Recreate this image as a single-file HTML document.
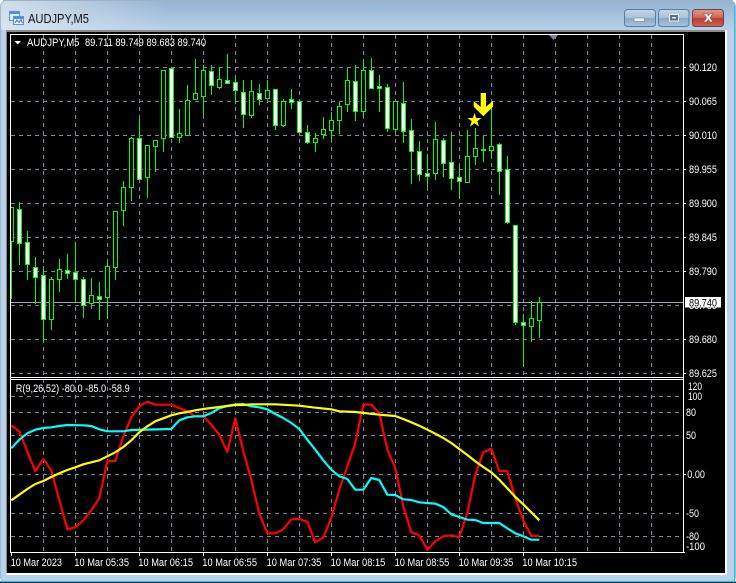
<!DOCTYPE html>
<html>
<head>
<meta charset="utf-8">
<title>AUDJPY,M5</title>
<style>
html,body{margin:0;padding:0;background:#fff;}
body{width:736px;height:583px;overflow:hidden;position:relative;font-family:"Liberation Sans",sans-serif;}
svg{position:absolute;left:0;top:0;display:block;}
</style>
</head>
<body>
<svg width="736" height="583" viewBox="0 0 736 583" xmlns="http://www.w3.org/2000/svg">
<defs>
<linearGradient id="tb" x1="0" y1="0" x2="0" y2="1"><stop offset="0" stop-color="#93b3d2"/><stop offset="1" stop-color="#b9d1ea"/></linearGradient>
<linearGradient id="tl" x1="0" y1="0" x2="1" y2="0"><stop offset="0" stop-color="#e6ebf0" stop-opacity=".75"/><stop offset="1" stop-color="#e6ebf0" stop-opacity="0"/></linearGradient>
<linearGradient id="btn" x1="0" y1="0" x2="0" y2="1"><stop offset="0" stop-color="#c3d5e7"/><stop offset=".48" stop-color="#a9c2db"/><stop offset=".52" stop-color="#8aa8c8"/><stop offset="1" stop-color="#a8c4e0"/></linearGradient>
<linearGradient id="cls" x1="0" y1="0" x2="0" y2="1"><stop offset="0" stop-color="#dd9a8e"/><stop offset=".48" stop-color="#cb6557"/><stop offset=".52" stop-color="#b83f30"/><stop offset="1" stop-color="#c6625a"/></linearGradient>
<clipPath id="ch"><rect x="11" y="35" width="672" height="517"/></clipPath>
</defs>

<!-- window -->
<rect x="0" y="0" width="736" height="583" fill="#fff"/>
<rect x="0.5" y="0.5" width="735" height="582" rx="6" fill="#b9d1ea" stroke="#a4bace"/>
<rect x="1" y="1" width="734" height="30" rx="5" fill="url(#tb)"/>
<rect x="1" y="1" width="170" height="30" rx="5" fill="url(#tl)"/>
<rect x="3" y="0" width="730" height="1" fill="#9fb1c2"/>
<rect x="0" y="581" width="736" height="1" fill="#28c0dc"/>
<rect x="734" y="6" width="1" height="576" fill="#28c0dc"/>
<rect x="0" y="582" width="736" height="1" fill="#1b3a50"/>

<!-- client frame -->
<rect x="6" y="30" width="721" height="545" fill="#fff"/>
<rect x="6" y="30" width="719" height="543" fill="#000"/>
<rect x="6" y="30" width="719" height="2" fill="#8a8a8a"/>
<rect x="6" y="30" width="1" height="543" fill="#8a8a8a"/>

<!-- title icon -->
<g shape-rendering="crispEdges">
<rect x="9.5" y="11.5" width="10" height="9" fill="#dfeafa" stroke="#5f8fd0"/>
<rect x="10" y="12" width="9" height="2" fill="#4f8fe0"/>
<rect x="13.5" y="16.5" width="10" height="8" fill="#eef4fc" stroke="#5f8fd0"/>
<rect x="14" y="17" width="9" height="2" fill="#4f8fe0"/>
</g>
<path d="M15 23l2-3 2 2.500 2-3 1.500 3.500" fill="none" stroke="#3a6fb8" stroke-width="1"/>

<text x="28" y="23" font-size="12.500" fill="#111" textLength="61" lengthAdjust="spacingAndGlyphs" font-family="Liberation Sans, sans-serif">AUDJPY,M5</text>

<!-- buttons -->
<rect x="624.5" y="9.500" width="31" height="17" rx="3" fill="url(#btn)" stroke="#5d7c9c"/>
<rect x="634" y="18" width="10.500" height="3.500" rx="1" fill="#eef2f6" stroke="#5d6f84" stroke-width=".5"/>
<rect x="658.5" y="9.500" width="30.500" height="17" rx="3" fill="url(#btn)" stroke="#5d7c9c"/>
<rect x="669.5" y="14.500" width="9" height="6.500" fill="#5a6f88" stroke="#eef2f6"/>
<rect x="672" y="17" width="4" height="1.500" fill="#dfe7ef"/>
<rect x="692.5" y="9.500" width="31" height="17" rx="3" fill="url(#cls)" stroke="#74403f"/>
<path d="M703.500 13.500h3l1.800 2.300 1.800-2.300h3l-3.200 4.200 3.200 4.300h-3l-1.800-2.400-1.800 2.400h-3l3.200-4.300z" fill="#f4f1ee" stroke="#7c3a32" stroke-width=".5"/>

<!-- grid -->
<path d="M11 67.500H683M11 101.500H683M11 135.500H683M11 169.500H683M11 203.500H683M11 237.500H683M11 271.500H683M11 305.500H683M11 339.500H683M11 373.500H683M11 396.500H683M11 412.500H683M11 435.500H683M11 474.500H683M11 513.500H683M11 536.500H683M43.500 35V552M75.500 35V552M107.500 35V552M139.500 35V552M171.500 35V552M203.500 35V552M235.500 35V552M267.500 35V552M299.500 35V552M331.500 35V552M363.500 35V552M395.500 35V552M427.500 35V552M459.500 35V552M491.500 35V552M523.500 35V552M555.500 35V552M587.500 35V552M619.500 35V552M651.500 35V552" fill="none" stroke="#778899" stroke-width="1" stroke-dasharray="4 4"/>

<!-- current price line -->
<rect x="11" y="302" width="672" height="1" fill="#9aa4b2"/>

<g clip-path="url(#ch)">
<!-- wicks -->
<path d="M11.500 207V299M19.500 202V265M27.500 231V280M35.500 257V304M43.500 266V343M51.500 277V330M59.500 259V292M67.500 254V279M75.500 242V301M83.500 277V318M91.500 278V309M99.500 282V320M107.500 262V319M115.500 211V280M123.500 181V226M131.500 137V201M139.500 118V180M147.500 145V198M155.500 140V172M163.500 70V152M171.500 68V137M179.500 109V143M187.500 85V136M195.500 59V100M203.500 65V115M211.500 65V95M219.500 67V89M227.500 54V84M235.500 76V104M243.500 80V128M251.500 80V118M259.500 84V105M267.500 80V99M275.500 89V130M283.500 99V127M291.500 89V109M299.500 101V133M307.500 125V144M315.500 133V152M323.500 117V139M331.500 112V139M339.500 102V134M347.500 68V112M355.500 65V121M363.500 59V117M371.500 58V88M379.500 75V112M387.500 84V132M395.500 101V133M403.500 82V143M411.500 119V184M419.500 141V181M427.500 154V187M435.500 122V180M443.500 138V177M451.500 132V190M459.500 165V199M467.500 130V182M475.500 128V165M483.500 136V162M491.500 107V157M499.500 143V195M507.500 156V224M515.500 225V325M523.500 314V367M531.500 301V342M539.500 297V338" fill="none" stroke="#00ff00" stroke-width="1"/>
<!-- bearish bodies -->
<path d="M17.500 209.500h4v34h-4zM25.500 242.500h4v22h-4zM33.500 267.500h4v10h-4zM41.500 275.500h4v44h-4zM65.500 270.500h4v3h-4zM73.500 272.500h4v7h-4zM81.500 279.500h4v26h-4zM97.500 296.500h4v3h-4zM137.500 138.500h4v41h-4zM169.500 68.500h4v69h-4zM209.500 71.500h4v14h-4zM225.500 80.500h4v3h-4zM233.500 82.500h4v8h-4zM241.500 92.500h4v22h-4zM257.500 93.500h4v6h-4zM273.500 89.500h4v36h-4zM289.500 99.500h4v3h-4zM297.500 101.500h4v31h-4zM305.500 132.500h4v10h-4zM353.500 81.500h4v30h-4zM369.500 70.500h4v18h-4zM377.500 86.500h4v2h-4zM385.500 87.500h4v41h-4zM401.500 103.500h4v28h-4zM409.500 130.500h4v21h-4zM417.500 151.500h4v23h-4zM425.500 173.500h4v3h-4zM441.500 140.500h4v23h-4zM449.500 162.500h4v16h-4zM457.500 177.500h4v4h-4zM497.500 144.500h4v27h-4zM505.500 169.500h4v53h-4zM513.500 225.500h4v97h-4zM521.500 322.500h4v3h-4z" fill="#fff" stroke="#00ff00" stroke-width="1"/>
<!-- bullish bodies -->
<path d="M9.500 207.500h4v34h-4zM49.500 279.500h4v40h-4zM57.500 269.500h4v10h-4zM89.500 295.500h4v8h-4zM105.500 266.500h4v31h-4zM113.500 211.500h4v56h-4zM121.500 187.500h4v23h-4zM129.500 138.500h4v49h-4zM145.500 145.500h4v32h-4zM153.500 140.500h4v6h-4zM161.500 70.500h4v68h-4zM177.500 133.500h4v4h-4zM185.500 100.500h4v35h-4zM193.500 93.500h4v6h-4zM201.500 70.500h4v26h-4zM217.500 79.500h4v8h-4zM249.500 91.500h4v24h-4zM265.500 90.500h4v8h-4zM281.500 101.500h4v24h-4zM313.500 138.500h4v4h-4zM321.500 129.500h4v5h-4zM329.500 120.500h4v10h-4zM337.500 106.500h4v14h-4zM345.500 80.500h4v24h-4zM361.500 70.500h4v41h-4zM393.500 101.500h4v28h-4zM433.500 139.500h4v34h-4zM465.500 156.500h4v26h-4zM473.500 148.500h4v8h-4zM489.500 146.500h4v4h-4zM529.500 318.500h4v8h-4zM537.500 302.500h4v18h-4z" fill="#000" stroke="#00ff00" stroke-width="1"/>
<rect x="481" y="149" width="5" height="2" fill="#00ff00"/>

<!-- objects -->
<path d="M480.700 93H486V106.700L493 100.700V106.700L483.300 116.300L473.700 106.700V101L480.700 107Z" fill="#ffff00"/>
<path d="M474.500 113L476.200 118H481.500L477.300 121.200L479 126.500L474.500 123.300L470 126.500L471.700 121.200L467.500 118H472.800Z" fill="#ffff00"/>

<!-- indicator -->
<g fill="none" stroke-width="2.200" stroke-linejoin="round">
<polyline stroke="#ff0000" points="11.300,425.300 19.300,431.300 27.300,451.300 35.300,471.300 43.300,459 51.300,470.300 59.300,500 67.300,529.300 75.300,527.300 83.300,520.300 91.300,510.300 99.300,498.300 107.300,461 115.300,461 123.300,436.300 131.300,417.300 139.300,406.300 147.300,401.700 155.300,404.700 171.300,404.700 179.300,408 187.300,411.300 195.300,416.300 203.300,416.300 211.300,424.700 219.300,434.700 227.300,452 235.300,418.300 243.300,451 251.300,479.700 259.300,513.700 267.300,533.300 275.300,533.300 283.300,529.300 291.300,519.300 299.300,519 307.300,521.700 315.300,542.300 323.300,537.300 331.300,518 339.300,489.700 347.300,466.300 355.300,443 363.300,404.700 371.300,404.700 379.300,413 387.300,449.700 395.300,468 403.300,506.300 411.300,532.300 419.300,535.300 427.300,549.700 435.300,541.300 443.300,536.300 451.300,535.300 459.300,537.300 467.300,513 475.300,474.700 483.300,452.300 491.300,448.700 499.300,471 507.300,471 515.300,498 523.300,520.300 531.300,536 539.300,536"/>
<polyline stroke="#00ffff" points="11.300,448.300 19.300,439.700 27.300,433.300 35.300,429.700 43.300,428 51.300,427.300 59.300,426 67.300,425 83.300,425.300 91.300,426 99.300,429.300 107.300,431.300 123.300,431.300 131.300,430 171.300,429 179.300,420.300 187.300,417.300 195.300,416.300 203.300,416.300 211.300,413 219.300,408.300 227.300,406 235.300,404.300 243.300,404 251.300,406.300 259.300,407.300 267.300,409.300 275.300,414 283.300,418 291.300,423 299.300,429 307.300,439.700 315.300,449.700 323.300,460.300 331.300,469.700 339.300,476.300 347.300,479 355.300,489.700 363.300,489.700 371.300,478 379.300,480 387.300,494.700 395.300,495 403.300,499.300 411.300,500 419.300,502.300 427.300,503 435.300,503.700 443.300,507 451.300,514.300 459.300,517 467.300,519.700 475.300,520 483.300,523 499.300,523 507.300,528.300 515.300,533.300 523.300,536.300 531.300,539.700 539.300,539.700"/>
<polyline stroke="#ffff00" points="11.300,500.300 19.300,494.700 27.300,489 35.300,484 43.300,481 51.300,477 59.300,473.300 67.300,470 75.300,467.300 83.300,464.300 91.300,462.300 99.300,460.300 107.300,456.300 115.300,452.300 123.300,447 131.300,440.300 139.300,432.300 147.300,426.300 155.300,421.300 163.300,418.300 171.300,415.300 179.300,413.300 187.300,412 195.300,410.300 203.300,409 211.300,408 219.300,407 227.300,406 235.300,405 243.300,405 251.300,404.300 275.300,404.300 299.300,405.700 315.300,407.700 331.300,409.300 339.300,411.300 355.300,412 379.300,414.700 395.300,416 403.300,419 411.300,422.300 419.300,425.700 427.300,429.700 435.300,433.700 443.300,438 451.300,443 459.300,449 467.300,455 475.300,461.300 483.300,467 491.300,472.300 499.300,479.700 507.300,488.300 515.300,497 523.300,504.300 531.300,512.300 539.300,520.300"/>
</g>
</g>

<!-- frame lines -->
<g fill="#fff" shape-rendering="crispEdges">
<rect x="10" y="34" width="674" height="1"/>
<rect x="10" y="34" width="1" height="519"/>
<rect x="683" y="34" width="1" height="519"/>
<rect x="10" y="377" width="674" height="1"/>
<rect x="10" y="379" width="674" height="1"/>
<rect x="10" y="552" width="675" height="1"/>
<rect x="11" y="553" width="1" height="3"/><rect x="75" y="553" width="1" height="3"/><rect x="139" y="553" width="1" height="3"/><rect x="203" y="553" width="1" height="3"/><rect x="267" y="553" width="1" height="3"/><rect x="331" y="553" width="1" height="3"/><rect x="395" y="553" width="1" height="3"/><rect x="459" y="553" width="1" height="3"/><rect x="523" y="553" width="1" height="3"/>
<rect x="684" y="67" width="2" height="1"/><rect x="684" y="101" width="2" height="1"/><rect x="684" y="135" width="2" height="1"/><rect x="684" y="169" width="2" height="1"/><rect x="684" y="203" width="2" height="1"/><rect x="684" y="237" width="2" height="1"/><rect x="684" y="271" width="2" height="1"/><rect x="684" y="339" width="2" height="1"/><rect x="684" y="373" width="2" height="1"/><rect x="684" y="474" width="2" height="1"/>
</g>
<polygon points="549,35 558,35 553.500,40" fill="#778899"/>
<polygon points="14.500,41 21,41 17.750,44.500" fill="#fff"/>

<!-- labels -->
<g font-size="11" fill="#fff" font-family="Liberation Sans, sans-serif">
<text x="27" y="46" textLength="52.500" lengthAdjust="spacingAndGlyphs">AUDJPY,M5</text>
<text x="85" y="46" textLength="121" lengthAdjust="spacingAndGlyphs">89.711 89.749 89.683 89.740</text>
<text x="15.700" y="392" textLength="114" lengthAdjust="spacingAndGlyphs">R(9,26,52) -80.0 -85.0 -58.9</text>
<text x="689" y="71" textLength="28" lengthAdjust="spacingAndGlyphs">90.120</text>
<text x="689" y="105" textLength="28" lengthAdjust="spacingAndGlyphs">90.065</text>
<text x="689" y="139" textLength="28" lengthAdjust="spacingAndGlyphs">90.010</text>
<text x="689" y="173" textLength="28" lengthAdjust="spacingAndGlyphs">89.955</text>
<text x="689" y="207" textLength="28" lengthAdjust="spacingAndGlyphs">89.900</text>
<text x="689" y="241" textLength="28" lengthAdjust="spacingAndGlyphs">89.845</text>
<text x="689" y="275" textLength="28" lengthAdjust="spacingAndGlyphs">89.790</text>
<text x="689" y="309" textLength="28" lengthAdjust="spacingAndGlyphs">89.735</text>
<text x="689" y="343" textLength="28" lengthAdjust="spacingAndGlyphs">89.680</text>
<text x="689" y="377" textLength="28" lengthAdjust="spacingAndGlyphs">89.625</text>
<text x="688" y="390" textLength="14" lengthAdjust="spacingAndGlyphs">120</text>
<text x="688" y="400" textLength="14" lengthAdjust="spacingAndGlyphs">100</text>
<text x="686" y="416" textLength="10" lengthAdjust="spacingAndGlyphs">80</text>
<text x="686" y="439" textLength="10" lengthAdjust="spacingAndGlyphs">50</text>
<text x="687.300" y="478" textLength="17.700" lengthAdjust="spacingAndGlyphs">0.00</text>
<text x="686" y="517" textLength="13" lengthAdjust="spacingAndGlyphs">-50</text>
<text x="686" y="540" textLength="13" lengthAdjust="spacingAndGlyphs">-80</text>
<text x="686" y="550" textLength="19" lengthAdjust="spacingAndGlyphs">-100</text>
<text x="10.700" y="566" textLength="51.300" lengthAdjust="spacingAndGlyphs">10 Mar 2023</text>
<text x="74.300" y="566" textLength="54.700" lengthAdjust="spacingAndGlyphs">10 Mar 05:35</text>
<text x="138.300" y="566" textLength="54.700" lengthAdjust="spacingAndGlyphs">10 Mar 06:15</text>
<text x="202.300" y="566" textLength="54.700" lengthAdjust="spacingAndGlyphs">10 Mar 06:55</text>
<text x="266.600" y="566" textLength="54.700" lengthAdjust="spacingAndGlyphs">10 Mar 07:35</text>
<text x="330.600" y="566" textLength="54.700" lengthAdjust="spacingAndGlyphs">10 Mar 08:15</text>
<text x="394.600" y="566" textLength="54.700" lengthAdjust="spacingAndGlyphs">10 Mar 08:55</text>
<text x="458.600" y="566" textLength="54.700" lengthAdjust="spacingAndGlyphs">10 Mar 09:35</text>
<text x="522.300" y="566" textLength="54.700" lengthAdjust="spacingAndGlyphs">10 Mar 10:15</text>
</g>
<rect x="685" y="297" width="36" height="10.500" fill="#fff"/>
<text x="689" y="306.500" font-size="11" fill="#000" textLength="28" lengthAdjust="spacingAndGlyphs" font-family="Liberation Sans, sans-serif">89.740</text>
</svg>
</body>
</html>
